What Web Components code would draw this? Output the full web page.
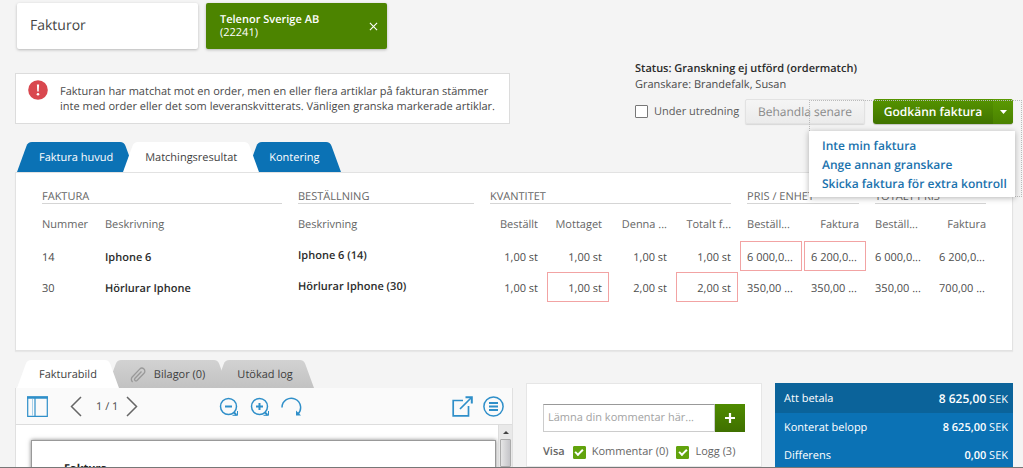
<!DOCTYPE html>
<html lang="sv">
<head>
<meta charset="utf-8">
<title>Fakturor</title>
<style>
html, body { margin: 0; height: 100%; }
body { font: 11px/16px "Open Sans", "Noto Sans", sans-serif; color: #4a4a4a; background: #f4f4f4; text-rendering: geometricPrecision; }
</style>
</head>
<body>
<invoice-app></invoice-app>
<script>
const define = (name, html, setup) => {
  const tpl = document.createElement('template');
  tpl.innerHTML = '<style>*{box-sizing:border-box}button,input{font:inherit;color:inherit;margin:0;text-rendering:inherit}b{font-weight:600}[hidden]{display:none}</style>' + html;
  customElements.define(name, class extends HTMLElement {
    constructor() {
      super();
      this.attachShadow({ mode: 'open' }).append(tpl.content.cloneNode(true));
      if (setup) setup(this, this.shadowRoot);
    }
  });
};

define('crumb-tile', `
<style>
:host { display: flex; align-items: center; flex: 0 1 181px; height: 46px; padding: 0 9px 0 13px; box-sizing: border-box;
  background: #fff; border-radius: 2px; box-shadow: 0 1px 3px rgba(0,0,0,.25); font-size: 14px; line-height: 20px; color: #444; }
:host([selected]) { background: #4c8400; color: #fff; font-size: 11px; line-height: 13px; padding-left: 14px; }
div { flex: 1; }
button { border: 0; background: none; padding: 0; width: 9px; height: 9px; display: none; }
:host([selected]) button { display: block; }
svg { display: block; }
</style>
<div><slot></slot></div>
<button aria-label="Stäng"><svg width="9" height="9" viewBox="0 0 10 10" stroke="#fff" stroke-width="1.2"><path d="M1 1l8 8M9 1l-8 8"/></svg></button>`);

define('alert-box', `
<style>
:host { display: flex; gap: 12px; align-items: flex-start; box-sizing: border-box; min-height: 51px; padding: 6px 12px; background: #fff; border: 1px solid #dcdcdc; line-height: 15px; }
svg { flex: none; }
p { margin: 0; padding-top: 4px; }
</style>
<svg width="20" height="20" viewBox="0 0 20 20"><circle cx="10" cy="10" r="9.8" fill="#d9484f"/><path d="M8.9 4.5h2.2l-.4 7H9.3z" fill="#fff"/><circle cx="10" cy="14.2" r="1.3" fill="#fff"/></svg>
<p role="alert"><slot></slot></p>`);

define('check-box', `
<style>
:host { display: inline-flex; }
label { display: flex; align-items: center; gap: 6px; white-space: nowrap; }
input { appearance: none; width: 13px; height: 13px; border: 1px solid #777; border-radius: 1px; background: #fff; display: grid; place-items: center; }
input:checked { background: #62a30d; border-color: #62a30d; }
input:checked::after { content: ""; width: 8px; height: 5px; border: solid #fff; border-width: 0 0 2px 2px; transform: translateY(-1px) rotate(-45deg); box-sizing: border-box; }
</style>
<label><input type="checkbox"><slot></slot></label>`, (host, root) => {
  root.querySelector('input').checked = host.hasAttribute('checked');
});

define('review-actions', `
<style>
:host { display: block; }
.status { color: #2b2b2b; font-weight: 600; }
.row { display: flex; align-items: center; height: 25px; margin-top: 6px; position: relative; }
check-box { flex: 1; color: #5c5c5c; }
.later { height: 25px; width: 120px; padding: 0; border: 1px solid #e2e2e2; border-radius: 2px; background: linear-gradient(#f5f5f5,#ebebeb); color: #8a8a8a; font-size: 12px; box-shadow: 0 1px 1px rgba(0,0,0,.12); }
.split { display: flex; margin-left: 8px; height: 25px; border-radius: 3px; overflow: hidden; background: linear-gradient(#559400,#407300); box-shadow: 0 1px 1px rgba(0,0,0,.2); color: #fff; }
.split button { border: 0; background: none; padding: 0; font-weight: 600; font-size: 12px; }
.main { width: 120px; }
.split .more { width: 20px; background: linear-gradient(#5b9a03,#4a8200); display: grid; place-items: center; }
.focus { position: absolute; right: -9px; top: 1px; width: 213px; height: 97px; border: 1px dotted #bbb; pointer-events: none; z-index: 1; }
.menu { position: absolute; right: -2px; top: 32px; width: 206px; padding: 5px 13px 4px; background: #fff; box-shadow: 0 1px 6px rgba(0,0,0,.3); z-index: 2; display: flex; flex-direction: column; }
.menu a { color: #1a72ad; font-weight: 600; font-size: 12px; line-height: 19px; text-decoration: none; white-space: nowrap; }
</style>
<div class="status">Status: Granskning ej utförd (ordermatch)</div>
<div>Granskare: Brandefalk, Susan</div>
<div class="row">
  <check-box>Under utredning</check-box>
  <button class="later">Behandla senare</button>
  <div class="split"><button class="main">Godkänn faktura</button><button class="more" aria-label="Fler val" aria-expanded="true"><svg width="7" height="4" viewBox="0 0 7 4"><path d="M0 0h7L3.500 4z" fill="#fff"/></svg></button></div>
  <div class="focus"></div>
  <nav class="menu"><a href="#inte-min">Inte min faktura</a><a href="#annan">Ange annan granskare</a><a href="#kontroll">Skicka faktura för extra kontroll</a></nav>
</div>`);

define('tab-item', `
<style>
:host { display: block; margin-left: -12px; position: relative; --bg: #0b72b5; color: #fff; }
:host(:first-child) { margin-left: 0; }
:host([muted]) { --bg: linear-gradient(#d2d2d2,#c2c2c2); color: #3f3f3f; }
:host([active]) { --bg: #fff; z-index: 2; color: #3f3f3f; }
button { position: relative; z-index: 0; display: flex; align-items: center; gap: 7px; height: 100%; border: 0; background: none; padding: 1px 22px 0; white-space: nowrap; }
button::before, button::after { content: ""; position: absolute; z-index: -1; top: 0; bottom: 0; background: var(--bg); }
button::before { left: 0; right: 30px; transform: skewX(-20deg); transform-origin: 0 100%; border-top-left-radius: 4px; }
button::after { left: 30px; right: 0; transform: skewX(20deg); transform-origin: 100% 100%; border-top-right-radius: 4px; }
</style>
<button role="tab"><slot></slot></button>`);

define('tab-strip', `
<style>
:host { display: flex; padding-left: 2px; height: 30px; isolation: isolate; }
:host([small]) { height: 28px; }
</style><slot></slot>`);

define('match-table', `
<style>
:host { display: block; background: #fff; border: 1px solid #e2e2e2; padding: 13px 18px 47px; box-shadow: 0 1px 1px rgba(0,0,0,.05); color: #4c4c4c; }
table { width: 100%; border-collapse: collapse; table-layout: fixed; }
th, td { padding: 0; text-align: right; font-weight: 400; white-space: nowrap; vertical-align: top; }
.l { text-align: left; }
th { color: #666; padding: 0 8px; }
.group th { text-align: left; }
.group span { display: block; height: 18px; line-height: 22px; border-bottom: 1px solid #d5d5d5; }
.heads th { height: 37px; padding-top: 13px; }
td span { display: block; height: 30px; line-height: 34px; margin: 0 1px 1px; padding: 0 7px; }
td .bad { border: 1px solid #f2a3a3; padding: 0 6px; line-height: 32px; }
td b { color: #2c2c2c; }
td.up span { line-height: 30px; }
</style>
<table>
<colgroup><col style="width:63px"><col style="width:193px"><col style="width:192px"><col style="width:64px"><col style="width:64px"><col style="width:65px"><col style="width:64px"><col style="width:64px"><col style="width:64px"><col style="width:64px"><col style="width:63px"></colgroup>
<thead>
<tr class="group"><th colspan="2"><span>FAKTURA</span></th><th><span>BESTÄLLNING</span></th><th colspan="4"><span>KVANTITET</span></th><th colspan="2"><span>PRIS / ENHET</span></th><th colspan="2"><span>TOTALT PRIS</span></th></tr>
<tr class="heads"><th class="l">Nummer</th><th class="l">Beskrivning</th><th class="l">Beskrivning</th><th>Beställt</th><th>Mottaget</th><th>Denna ...</th><th>Totalt f...</th><th class="l">Beställ...</th><th>Faktura</th><th class="l">Beställ...</th><th>Faktura</th></tr>
</thead>
<tbody>
<tr><td class="l"><span>14</span></td><td class="l"><span><b>Iphone 6</b></span></td><td class="l up"><span><b>Iphone 6 (14)</b></span></td><td><span>1,00 st</span></td><td><span>1,00 st</span></td><td><span>1,00 st</span></td><td><span>1,00 st</span></td><td class="l"><span class="bad">6 000,0...</span></td><td class="l"><span class="bad">6 200,0...</span></td><td class="l"><span>6 000,0...</span></td><td class="l"><span>6 200,0...</span></td></tr>
<tr><td class="l"><span>30</span></td><td class="l"><span><b>Hörlurar Iphone</b></span></td><td class="l up"><span><b>Hörlurar Iphone (30)</b></span></td><td><span>1,00 st</span></td><td><span class="bad">1,00 st</span></td><td><span>2,00 st</span></td><td><span class="bad">2,00 st</span></td><td class="l"><span>350,00 ...</span></td><td class="l"><span>350,00 ...</span></td><td class="l"><span>350,00 ...</span></td><td class="l"><span>700,00 ...</span></td></tr>
</tbody>
</table>`);

define('document-viewer', `
<style>
:host { display: flex; flex-direction: column; min-height: 0; background: #fff; border: solid #e0e0e0; border-width: 0 1px; }
.bar { display: flex; align-items: center; height: 37px; flex: none; padding: 1px 8px 0 11px; background: #fafafa; border-bottom: 1px solid #ddd; gap: 11px; }
.bar button { border: 0; padding: 0; background: none; display: block; }
.pager { display: flex; align-items: center; gap: 14px; margin-left: 11px; }
.pager button + span { margin-right: -6px; }
.zoom { display: flex; gap: 11px; margin-left: 70px; }
.out { display: flex; gap: 10px; margin-left: auto; }
svg { display: block; fill: none; stroke: #2f8fc9; stroke-width: 1.5; }
.pager svg { stroke: #666; }
.body { flex: 1; min-height: 0; display: flex; overflow: hidden; }
.canvas { flex: 1; padding: 15px 2px 0 15px; }
.page { height: 100%; border: 1px solid #999; border-bottom: 0; box-shadow: 0 0 4px rgba(0,0,0,.5); padding: 20px 32px; font-weight: 700; color: #222; }
.scroll { width: 14px; background: #e9e9e9; border-left: 1px solid #ddd; display: flex; flex-direction: column; align-items: center; }
.scroll i { height: 14px; display: grid; place-items: center; }
.scroll i::before { content: ""; border: 3px solid transparent; border-top: 0; border-bottom-color: #444; }
.scroll b { flex: 1; width: 11px; border: 1px solid #aaa; border-radius: 1px; background: linear-gradient(90deg,#e6e6e6,#c4c4c8); }
</style>
<div class="bar">
  <button aria-label="Sidopanel"><svg width="21" height="21" viewBox="0 0 21 21"><path d="M.7 1h19.600v19.300H.7zM8 2v18" stroke-width="1.200"/><path d="M0 1.500h21" stroke-width="2.500"/><path d="M5.500 3v17" stroke="#a8d1ea" stroke-width="1"/></svg></button>
  <div class="pager"><button aria-label="Föregående"><svg width="12" height="21" viewBox="0 0 12 21"><path d="M11 1L1.500 10.500 11 20"/></svg></button><span>1 / 1</span><button aria-label="Nästa"><svg width="12" height="21" viewBox="0 0 12 21"><path d="M1 1l9.500 9.500L1 20"/></svg></button></div>
  <div class="zoom">
    <button aria-label="Zooma ut"><svg width="20" height="20" viewBox="0 0 20 20"><circle cx="9.500" cy="9.500" r="8"/><path d="M6 9.500h7M14.500 15l3 3" stroke-width="2"/><path d="M13.500 18.300h5V14" stroke-width="1"/></svg></button>
    <button aria-label="Zooma in"><svg width="20" height="20" viewBox="0 0 20 20"><circle cx="9.500" cy="9.500" r="8"/><path d="M6 9.500h7M9.500 6v7M14.500 15l3 3" stroke-width="2"/><path d="M13.500 18.300h5V14" stroke-width="1"/></svg></button>
    <button aria-label="Rotera"><svg width="21" height="20" viewBox="0 0 21 20"><path d="M1 10.500a9.300 9.300 0 1 1 15.500 7"/><path d="M15 13.500v5h5z" fill="#2f8fc9" stroke="none"/></svg></button>
  </div>
  <div class="out">
    <button aria-label="Öppna i nytt fönster"><svg width="21" height="21" viewBox="0 0 21 21"><path d="M11 4.500H1.200v15.300h15.300V10M8 13L19 2" stroke-width="1.700"/><path d="M13.500 1.200h6.300v6.300" stroke-width="2"/></svg></button>
    <button aria-label="Meny"><svg width="21" height="21" viewBox="0 0 21 21"><circle cx="10.500" cy="10.500" r="9.600"/><path d="M6 7h9M6 10.500h9M6 14h9" stroke-width="1.800"/></svg></button>
  </div>
</div>
<div class="body"><div class="canvas"><div class="page">Faktura</div></div><div class="scroll"><i></i><b></b></div></div>`);

define('comment-panel', `
<style>
:host { display: block; background: #fff; border: 1px solid #e6e6e6; padding: 20px 16px; color: #666; }
form { display: flex; height: 28px; }
input { flex: 1; min-width: 0; border: 1px solid #ccc; border-top-color: #999; border-radius: 0; padding: 0 4px; outline: 0; }
input::placeholder { color: #a3a3a3; opacity: 1; }
button { width: 30px; border: 0; padding: 0; background: linear-gradient(#4f8b00,#3f7000); display: grid; place-items: center; }
.show { display: flex; align-items: center; gap: 8px; margin-top: 12px; }
</style>
<form onsubmit="return false"><input aria-label="Kommentar" placeholder="Lämna din kommentar här..."><button aria-label="Lägg till"><svg width="10" height="10" viewBox="0 0 10 10"><path d="M5 0v10M0 5h10" stroke="#fff" stroke-width="2.200"/></svg></button></form>
<div class="show"><b>Visa</b><check-box checked>Kommentar (0)</check-box><check-box checked>Logg (3)</check-box></div>`);

define('sum-row', `
<style>
:host { display: flex; justify-content: space-between; align-items: center; box-sizing: border-box; height: 28px; padding: 2px 5px 0 9px; }
:host([total]) { height: 30px; background: #0b639a; }
:host([total]) .value { font-size: 12px; }
</style><slot name="label"></slot><span><span class="value"><slot></slot></span> SEK</span>`);

define('invoice-app', `
<style>
:host { display: flex; flex-direction: column; height: 100vh; box-sizing: border-box; overflow: hidden; padding: 3px 10px 0 15px; border-bottom: 1px solid #777; }
.crumbs { display: flex; gap: 8px; padding-left: 2px; flex: none; }
.top { display: grid; grid-template-columns: 495fr 378fr; column-gap: 125px; align-items: end; margin-top: 12px; }
.tabs { margin-top: 18px; flex: none; }
.lower { flex: 1; min-height: 0; display: grid; grid-template: minmax(0,1fr) / 498fr 236fr 238fr; gap: 13px; margin-top: 9px; }
.left { display: flex; flex-direction: column; min-height: 0; }
review-actions { z-index: 5; }
document-viewer { flex: 1; }
.side { margin-top: 23px; }
.sum { background: #0b72b5; color: #fff; }
</style>
<div class="crumbs"><crumb-tile>Fakturor</crumb-tile><crumb-tile selected><b>Telenor Sverige AB</b><br>(22241)</crumb-tile></div>
<div class="top"><alert-box>Fakturan har matchat mot en order, men en eller flera artiklar på fakturan stämmer inte med order eller det som leveranskvitterats. Vänligen granska markerade artiklar.</alert-box><review-actions></review-actions></div>
<tab-strip class="tabs" role="tablist"><tab-item>Faktura huvud</tab-item><tab-item active>Matchingsresultat</tab-item><tab-item>Kontering</tab-item></tab-strip>
<match-table></match-table>
<div class="lower">
  <div class="left">
    <tab-strip small role="tablist"><tab-item active>Fakturabild</tab-item><tab-item muted><svg width="18" height="18" viewBox="0 0 18 18" fill="none" stroke="#999" stroke-width="1.300"><path d="M12.500 5.500l-6.700 7a1.500 1.500 0 0 0 2.200 2L15 7.300a3 3 0 0 0-4.300-4.200L3.200 11a3.500 3.500 0 0 0 .4 5"/></svg>Bilagor (0)</tab-item><tab-item muted>Utökad log</tab-item></tab-strip>
    <document-viewer></document-viewer>
  </div>
  <comment-panel class="side"></comment-panel>
  <div class="side sum"><sum-row total><span slot="label">Att betala</span><b>8 625,00</b></sum-row><sum-row><span slot="label">Konterat belopp</span><b>8 625,00</b></sum-row><sum-row><span slot="label">Differens</span><b>0,00</b></sum-row></div>
</div>`);
</script>
</body>
</html>
